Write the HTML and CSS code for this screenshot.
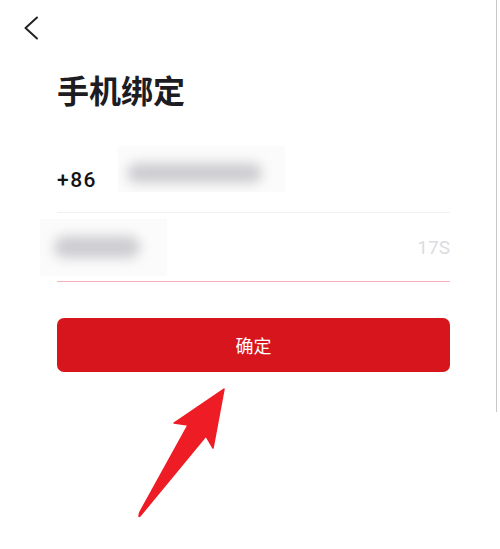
FILE: index.html
```
<!DOCTYPE html>
<html lang="zh-CN">
<head>
    <meta charset="UTF-8">
    <meta name="viewport" content="width=device-width, initial-scale=1.0">
    <title>手机绑定</title>
    <link rel="stylesheet" href="styles.css">
</head>
<body>
    <div class="page">
        <!-- Top bar -->
        <div class="topbar">
            <svg class="back-icon" width="24" height="24" viewBox="0 0 24 24">
                <path d="M18 1.5 L6.5 12 L18 22.5" fill="none" stroke="#222" stroke-width="2" stroke-linecap="round" stroke-linejoin="round"/>
            </svg>
        </div>

        <div class="content">
            <h1 class="title">手机绑定</h1>

            <div class="field phone-row">
                <span class="prefix">+86</span>
                <div class="masked masked-phone"><div class="masked-bar"></div></div>
            </div>

            <div class="field code-row">
                <div class="masked masked-code"><div class="masked-bar"></div></div>
                <span class="countdown">17S</span>
            </div>

            <button class="btn-confirm">确定</button>
        </div>

        <!-- annotation arrow -->
        <svg class="arrow" width="100" height="140" viewBox="0 0 100 140">
            <path d="M6 132 Q4 134 6 128 L54 41 L40 39 L90 5 L79 64 L72 52 Z" fill="#ee1c25" stroke="#ee1c25" stroke-width="1.5" stroke-linejoin="round"/>
        </svg>

        <div class="edge-line"></div>
    </div>
</body>
</html>
```

FILE: styles.css
```
/* Base */
body {
    margin: 0;
    padding: 0;
    background: #ffffff;
    font-family: "Noto Sans CJK SC", "Noto Sans", sans-serif;
    color: #1a1a1a;
}

.page {
    position: relative;
    width: 500px;
    height: 549px;
    overflow: hidden;
}

.topbar {
    height: 56px;
    padding-left: 19px;
    display: flex;
    align-items: center;
}

.content {
    padding: 14px 50px 0 57px;
}

.title {
    margin: 0 0 38px;
    font-size: 32px;
    line-height: 38px;
    font-weight: 600;
    color: #1c1c22;
}

/* Input rows */
.field {
    display: flex;
}

.phone-row {
    height: 66px;
    align-items: flex-start;
    border-bottom: 1px solid #f1f1f2;
}

.prefix {
    width: 61px;
    padding-top: 22px;
    font-family: "Roboto", "Liberation Sans", sans-serif;
    font-size: 21px;
    line-height: 24px;
    font-weight: 500;
    letter-spacing: 1.5px;
    color: #141414;
}

.code-row {
    height: 68px;
    align-items: center;
    justify-content: space-between;
    border-bottom: 1px solid #f5b3b9;
}

.countdown {
    font-family: "Roboto", "Liberation Sans", sans-serif;
    font-size: 19px;
    color: #dcdce0;
}

/* blurred placeholders */
.masked {
    background: #fbfbfb;
    display: flex;
    align-items: center;
    overflow: hidden;
}

.masked-bar {
    background: #cdcdd1;
    border-radius: 12px;
    filter: blur(6px);
}

.masked-phone {
    width: 167px;
    height: 46px;
}

.masked-phone .masked-bar {
    width: 135px;
    height: 20px;
    margin-left: 9px;
    margin-top: 8px;
}

.masked-code {
    width: 127px;
    height: 57px;
    margin-left: -17px;
}

.masked-code .masked-bar {
    width: 86px;
    height: 22px;
    margin-left: 14px;
}

/* Button */
.btn-confirm {
    display: block;
    width: 100%;
    height: 54px;
    margin-top: 36px;
    border: none;
    border-radius: 7px;
    background: #d6151d;
    color: #ffffff;
    font-family: "Noto Sans CJK SC", sans-serif;
    font-size: 18px;
    font-weight: 400;
}

.arrow {
    position: absolute;
    left: 134px;
    top: 384px;
}

.edge-line {
    position: absolute;
    left: 496px;
    top: 0;
    width: 1px;
    height: 412px;
    background: #c8c8c8;
}
```
